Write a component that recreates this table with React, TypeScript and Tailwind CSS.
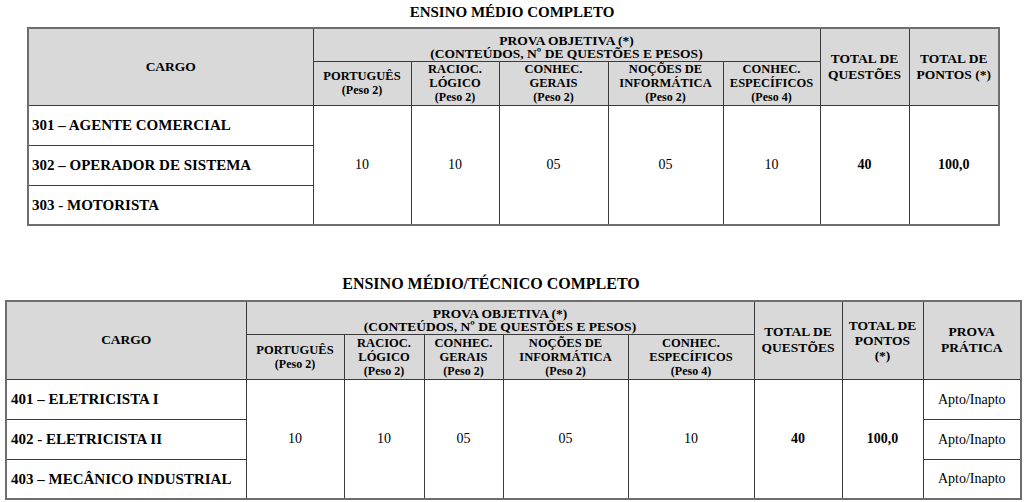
import React from "react";

type Subject = { name: string[]; peso: string };

const subjects: Subject[] = [
  { name: ["PORTUGUÊS"], peso: "(Peso 2)" },
  { name: ["RACIOC.", "LÓGICO"], peso: "(Peso 2)" },
  { name: ["CONHEC.", "GERAIS"], peso: "(Peso 2)" },
  { name: ["NOÇÕES DE", "INFORMÁTICA"], peso: "(Peso 2)" },
  { name: ["CONHEC.", "ESPECÍFICOS"], peso: "(Peso 4)" },
];

const counts = ["10", "10", "05", "05", "10"];

const th = "border border-[#3a3a3a] bg-[#d9d9d9] text-center align-middle font-bold p-0";
const td = "border border-[#3a3a3a] p-0";

function SubjectHeads() {
  return (
    <>
      {subjects.map((s, i) => (
        <th key={i} className={`${th} text-[12.5px] leading-[14px]`}>
          {s.name.map((n) => (
            <div key={n}>{n}</div>
          ))}
          <div className="text-[12px] leading-[14px]">{s.peso}</div>
        </th>
      ))}
    </>
  );
}

function ProvaHead() {
  return (
    <th colSpan={5} className={`${th} text-[13.5px] leading-[13px] pt-1`}>
      <div>PROVA OBJETIVA (*)</div>
      <div>(CONTEÚDOS, Nº DE QUESTÕES E PESOS)</div>
    </th>
  );
}

function MedioTable() {
  const cargos = ["301 – AGENTE COMERCIAL", "302 – OPERADOR DE SISTEMA", "303 - MOTORISTA"];
  return (
    <table className="table-fixed border-collapse border-2 border-[#6e6e6e] w-[971px] ml-[27px]">
      <colgroup>
        <col className="w-[285px]" />
        <col className="w-[98px]" />
        <col className="w-[88px]" />
        <col className="w-[109px]" />
        <col className="w-[115px]" />
        <col className="w-[97px]" />
        <col className="w-[89px]" />
        <col className="w-[90px]" />
      </colgroup>
      <thead>
        <tr className="h-[33px]">
          <th rowSpan={2} className={`${th} text-[13.5px]`}>CARGO</th>
          <ProvaHead />
          <th rowSpan={2} className={`${th} text-[13.5px] leading-[16px]`}>
            TOTAL DE<br />QUESTÕES
          </th>
          <th rowSpan={2} className={`${th} text-[13.5px] leading-[16px]`}>
            TOTAL DE<br />PONTOS (*)
          </th>
        </tr>
        <tr className="h-[44px]">
          <SubjectHeads />
        </tr>
      </thead>
      <tbody>
        {cargos.map((c, r) => (
          <tr key={c} className="h-[40px]">
            <td className={`${td} text-[15px] font-bold pl-[3px]`}>{c}</td>
            {r === 0 && (
              <>
                {counts.map((n, i) => (
                  <td key={i} rowSpan={3} className={`${td} text-[14px] text-center`}>{n}</td>
                ))}
                <td rowSpan={3} className={`${td} text-[14px] text-center font-bold`}>40</td>
                <td rowSpan={3} className={`${td} text-[14px] text-center font-bold`}>100,0</td>
              </>
            )}
          </tr>
        ))}
      </tbody>
    </table>
  );
}

function TecnicoTable() {
  const cargos = ["401 – ELETRICISTA I", "402 - ELETRICISTA II", "403 – MECÂNICO INDUSTRIAL"];
  return (
    <table className="table-fixed border-collapse border-2 border-[#6e6e6e] w-[1015px] ml-[5px]">
      <colgroup>
        <col className="w-[240px]" />
        <col className="w-[98px]" />
        <col className="w-[80px]" />
        <col className="w-[79px]" />
        <col className="w-[125px]" />
        <col className="w-[126px]" />
        <col className="w-[88px]" />
        <col className="w-[81px]" />
        <col className="w-[98px]" />
      </colgroup>
      <thead>
        <tr className="h-[33px]">
          <th rowSpan={2} className={`${th} text-[13.5px]`}>CARGO</th>
          <ProvaHead />
          <th rowSpan={2} className={`${th} text-[13.5px] leading-[16px]`}>
            TOTAL DE<br />QUESTÕES
          </th>
          <th rowSpan={2} className={`${th} text-[13.5px] leading-[15px]`}>
            TOTAL DE<br />PONTOS<br />(*)
          </th>
          <th rowSpan={2} className={`${th} text-[13.5px] leading-[16px]`}>
            PROVA<br />PRÁTICA
          </th>
        </tr>
        <tr className="h-[45px]">
          <SubjectHeads />
        </tr>
      </thead>
      <tbody>
        {cargos.map((c, r) => (
          <tr key={c} className="h-[40px]">
            <td className={`${td} text-[15px] font-bold pl-[4px]`}>{c}</td>
            {r === 0 && (
              <>
                {counts.map((n, i) => (
                  <td key={i} rowSpan={3} className={`${td} text-[14px] text-center`}>{n}</td>
                ))}
                <td rowSpan={3} className={`${td} text-[14px] text-center font-bold`}>40</td>
                <td rowSpan={3} className={`${td} text-[14px] text-center font-bold`}>100,0</td>
              </>
            )}
            <td className={`${td} text-[14px] text-center`}>Apto/Inapto</td>
          </tr>
        ))}
      </tbody>
    </table>
  );
}

export default function App() {
  return (
    <div className="w-[1024px] h-[502px] bg-white text-black font-['Liberation_Serif',serif] overflow-hidden">
      <h2 className="text-center text-[15px] font-bold leading-[18px] pt-[3px] h-[27px]">
        ENSINO MÉDIO COMPLETO
      </h2>
      <MedioTable />
      <h2 className="text-center text-[16px] font-bold leading-[18px] mt-[49px] pr-[42px] h-[25px]">
        ENSINO MÉDIO/TÉCNICO COMPLETO
      </h2>
      <TecnicoTable />
    </div>
  );
}
